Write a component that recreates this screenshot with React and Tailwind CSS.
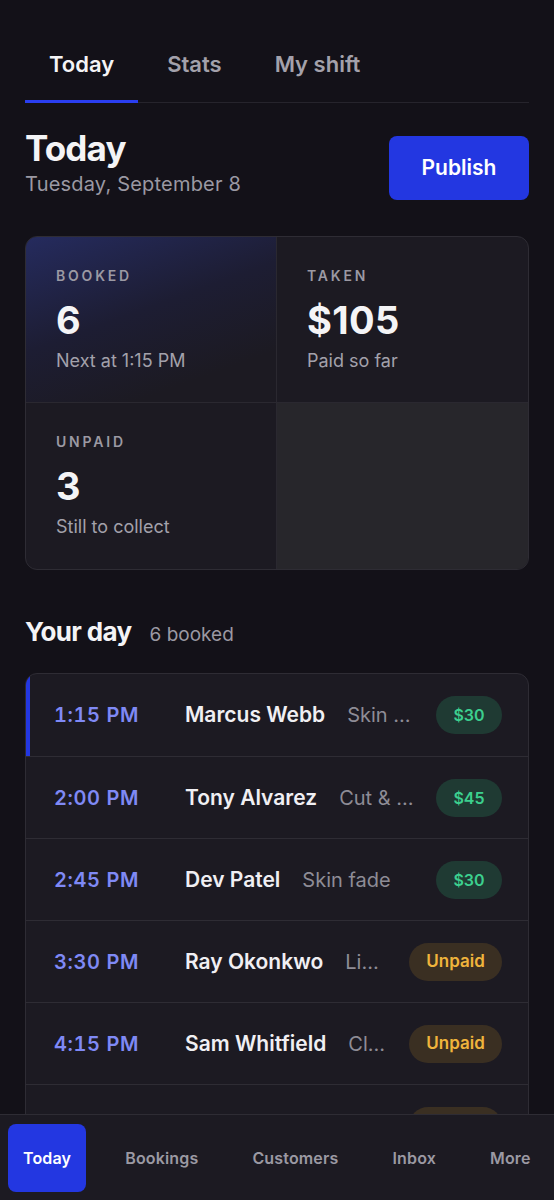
import React from 'react';

const bookings = [
  { time: '1:15 PM', name: 'Marcus Webb', service: 'Skin fade', status: 'paid', amount: '$30', next: true },
  { time: '2:00 PM', name: 'Tony Alvarez', service: 'Cut & beard', status: 'paid', amount: '$45' },
  { time: '2:45 PM', name: 'Dev Patel', service: 'Skin fade', status: 'paid', amount: '$30' },
  { time: '3:30 PM', name: 'Ray Okonkwo', service: 'Line up', status: 'unpaid' },
  { time: '4:15 PM', name: 'Sam Whitfield', service: 'Classic cut', status: 'unpaid' },
  { time: '5:00 PM', name: 'Jordan Reyes', service: 'Beard trim', status: 'unpaid' },
];

const StatCell = ({ label, value, sub, className = '' }) => (
  <div className={`h-[166px] pl-[30px] pt-[32px] ${className}`}>
    <div className="text-[14px] font-semibold tracking-[0.2em] text-[#9b99a3] leading-none">{label}</div>
    <div className="mt-[18px] text-[38px] font-bold tracking-[0.01em] text-[#f4f4f6] leading-none">{value}</div>
    <div className="mt-[13px] text-[18px] text-[#a3a1ab] leading-none">{sub}</div>
  </div>
);

const Badge = ({ status, amount }) =>
  status === 'paid' ? (
    <span className="shrink-0 h-[38px] w-[66px] rounded-full bg-[#1f3a33] text-[#3ccf8e] text-[16px] font-semibold flex items-center justify-center">
      {amount}
    </span>
  ) : (
    <span className="shrink-0 h-[38px] w-[93px] rounded-full bg-[#3a2f22] text-[#f0b43c] text-[17px] font-semibold flex items-center justify-center">
      Unpaid
    </span>
  );

export default function App() {
  const tabs = ['Today', 'Stats', 'My shift'];
  const nav = ['Today', 'Bookings', 'Customers', 'Inbox', 'More'];

  return (
    <div className="min-h-screen bg-[#131118] text-white pb-[90px]" style={{ fontFamily: 'Inter, "Noto Sans", sans-serif' }}>
      <div className="px-[25px] pt-[53px]">
        {/* Tabs */}
        <div className="flex border-b border-[#26242c]">
          {tabs.map((t, i) => (
            <div
              key={t}
              className={`px-6 pb-[25px] text-[22px] font-semibold leading-none ${
                i === 0 ? 'text-[#f4f4f6] border-b-[3px] border-[#2a3ef0] -mb-px' : 'text-[#a3a1ab]'
              } ${i > 0 ? 'ml-[5px]' : ''}`}
            >
              {t}
            </div>
          ))}
        </div>

        {/* Header */}
        <div className="mt-[33px] flex items-start justify-between">
          <div>
            <h1 className="text-[35px] font-bold leading-none tracking-tight text-[#f4f4f6] -mt-[5px]">Today</h1>
            <div className="mt-[8px] text-[20px] tracking-[0.01em] text-[#9b99a3] leading-none">Tuesday, September 8</div>
          </div>
          <button className="h-[64px] w-[140px] rounded-[8px] bg-[#2337e1] text-[21px] font-semibold text-white">
            Publish
          </button>
        </div>

        {/* Stats */}
        <div className="mt-[36px] rounded-[12px] border border-[#2e2c34] overflow-hidden grid grid-cols-2 bg-[#1c1a22]">
          <StatCell
            label="BOOKED"
            value="6"
            sub="Next at 1:15 PM"
            className="border-r border-b border-[#2a2830] bg-[linear-gradient(160deg,#252b5e_0%,#1d1d33_45%,#1c1a22_80%)]"
          />
          <StatCell label="TAKEN" value="$105" sub="Paid so far" className="border-b border-[#2a2830]" />
          <StatCell label="UNPAID" value="3" sub="Still to collect" className="border-r border-[#2a2830]" />
          <div className="bg-[#27262b]" />
        </div>

        {/* Your day */}
        <div className="mt-[42px] flex items-baseline gap-[18px]">
          <h2 className="text-[26px] font-bold tracking-tight text-[#f4f4f6]">Your day</h2>
          <span className="text-[19px] text-[#9b99a3]">6 booked</span>
        </div>

        <div className="mt-[22px] rounded-[12px] border border-[#2e2c34] overflow-hidden bg-[#1c1a22]">
          {bookings.map((b, i) => (
            <div
              key={b.time}
              className={`h-[82px] flex items-center pr-[26px] ${i > 0 ? 'border-t border-[#2e2c34]' : ''} ${
                b.next ? 'border-l-[4px] border-l-[#2337e1] pl-[24px]' : 'pl-[28px]'
              }`}
            >
              <div className="w-[131px] shrink-0 text-[20px] font-semibold tracking-[0.03em] tabular-nums text-[#7f89f5]">{b.time}</div>
              <div className="shrink-0 text-[21px] font-semibold text-[#f0eff3]">{b.name}</div>
              <div className="ml-[22px] mr-[22px] flex-1 min-w-0 truncate text-[20px] text-[#8e8c96]">{b.service}</div>
              <Badge status={b.status} amount={b.amount} />
            </div>
          ))}
        </div>
      </div>

      {/* Bottom nav */}
      <div className="fixed bottom-0 left-0 right-0 h-[86px] bg-[#1c1a22] border-t border-[#2e2c34] flex items-center gap-[24px] px-[8px]">
        {nav.map((n, i) => (
          <div
            key={n}
            className={`h-[68px] px-[15px] flex items-center justify-center text-[16px] font-semibold tracking-[0.01em] ${
              i === 0 ? 'rounded-[8px] bg-[#2337e1] text-white' : 'text-[#9b99a3]'
            }`}
          >
            {n}
          </div>
        ))}
      </div>
    </div>
  );
}
